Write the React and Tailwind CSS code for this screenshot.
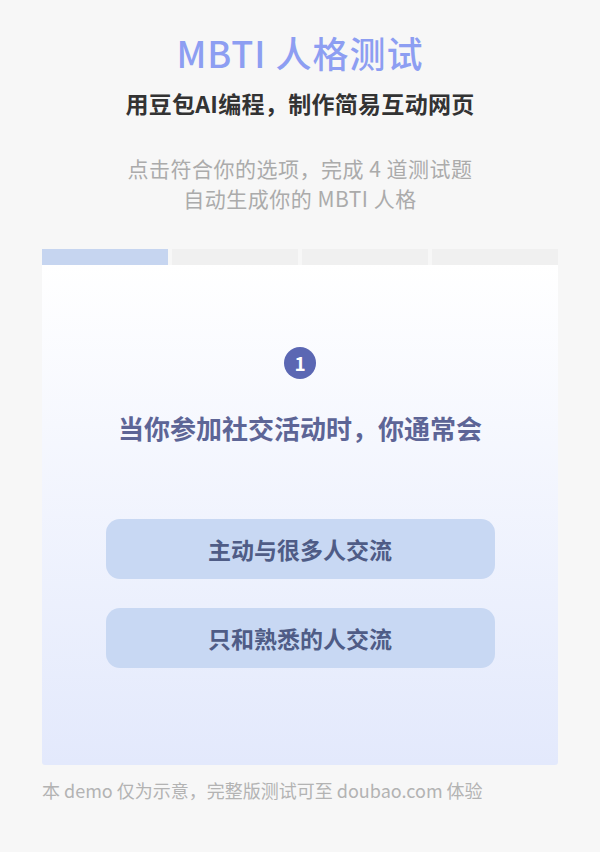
import React from "react";

export default function App() {
  const font = { fontFamily: '"Noto Sans CJK SC", "Noto Sans", sans-serif' };
  return (
    <div className="w-[600px] h-[852px] bg-[#f7f7f7] flex flex-col items-center" style={font}>
      <h1 className="mt-[30px] text-[36px] leading-[44px] font-medium text-[#8d9ef2] tracking-[1px]">MBTI 人格测试</h1>
      <p className="mt-[14px] text-[23px] leading-[30px] font-bold text-[#333333] tracking-[0.3px]">用豆包AI编程，制作简易互动网页</p>
      <div className="mt-[35px] flex flex-col items-center text-[21px] leading-[30px] text-[#ababab] tracking-[0.5px]">
        <p>点击符合你的选项，完成 4 道测试题</p>
        <p>自动生成你的 MBTI 人格</p>
      </div>
      <div className="mt-[36px] w-[516px] flex flex-col">
        <div className="flex gap-[4px] h-[16px]">
          <div className="flex-1 bg-[#c6d5f0]"></div>
          <div className="flex-1 bg-[#f0f0f0]"></div>
          <div className="flex-1 bg-[#f0f0f0]"></div>
          <div className="flex-1 bg-[#f0f0f0]"></div>
        </div>
        <div className="h-[500px] bg-gradient-to-b from-[#ffffff] to-[#e3e9fc] flex flex-col items-center rounded-b-[3px]">
          <div className="mt-[82px] w-[32px] h-[32px] rounded-full bg-[#5b67b3] text-white text-[19px] font-bold flex items-center justify-center">1</div>
          <p className="mt-[31px] text-[26px] leading-[36px] font-bold text-[#5d6596]">当你参加社交活动时，你通常会</p>
          <div className="mt-[73px] w-[389px] flex flex-col gap-[29px]">
            <div className="h-[60px] rounded-[14px] bg-[#c8d8f3] flex items-center justify-center text-[23px] font-bold text-[#4f5c86]">主动与很多人交流</div>
            <div className="h-[60px] rounded-[14px] bg-[#c8d8f3] flex items-center justify-center text-[23px] font-bold text-[#4f5c86]">只和熟悉的人交流</div>
          </div>
        </div>
        <p className="mt-[12px] text-[18px] leading-[26px] text-[#b3b3b3]">本 demo 仅为示意，完整版测试可至 doubao.com 体验</p>
      </div>
    </div>
  );
}
